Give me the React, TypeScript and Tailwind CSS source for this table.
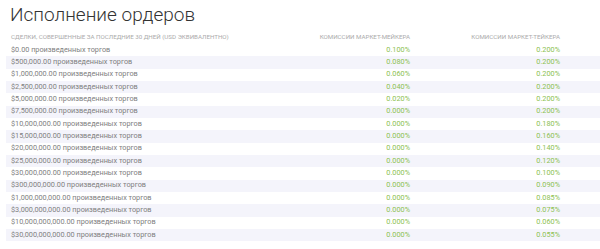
const rows: [string, string, string][] = [
  ['$0.00', '0.100%', '0.200%'],
  ['$500,000.00', '0.080%', '0.200%'],
  ['$1,000,000.00', '0.060%', '0.200%'],
  ['$2,500,000.00', '0.040%', '0.200%'],
  ['$5,000,000.00', '0.020%', '0.200%'],
  ['$7,500,000.00', '0.000%', '0.200%'],
  ['$10,000,000.00', '0.000%', '0.180%'],
  ['$15,000,000.00', '0.000%', '0.160%'],
  ['$20,000,000.00', '0.000%', '0.140%'],
  ['$25,000,000.00', '0.000%', '0.120%'],
  ['$30,000,000.00', '0.000%', '0.100%'],
  ['$300,000,000.00', '0.000%', '0.090%'],
  ['$1,000,000,000.00', '0.000%', '0.085%'],
  ['$3,000,000,000.00', '0.000%', '0.075%'],
  ['$10,000,000,000.00', '0.000%', '0.060%'],
  ['$30,000,000,000.00', '0.000%', '0.055%'],
]

export default function App() {
  return (
    <div className="w-[600px] h-[249px] bg-white overflow-hidden font-['Roboto',sans-serif]">
      <h1 className="h-[31px] pl-[10px] pt-[3px] text-[19px] leading-[24px] font-light text-[#333]">
        Исполнение ордеров
      </h1>

      <div className="pl-[6px]">
        {/* шапка таблицы */}
        <div className="grid grid-cols-[1fr_130px_150px_40px] h-[13px] items-center text-[6.2px] uppercase text-[#ababab]">
          <div className="pl-[5px]">Сделки, совершенные за последние 30 дней (USD эквивалентно)</div>
          <div className="text-right">Комиссии маркет-мейкера</div>
          <div className="text-right">Комиссии маркет-тейкера</div>
          <div />
        </div>

        {rows.map(([volume, maker, taker], i) => (
          <div
            key={volume}
            className={`grid grid-cols-[1fr_130px_150px_40px] h-[12.33px] items-center text-[7.3px] ${
              i % 2 === 1 ? 'bg-[#f4f4fb]' : 'bg-white'
            }`}
          >
            <div className="pl-[5px] text-[#808080]">{volume} произведенных торгов</div>
            <div className="text-right text-[#8cc152]">{maker}</div>
            <div className="text-right text-[#8cc152]">{taker}</div>
            <div />
          </div>
        ))}
      </div>
    </div>
  )
}
